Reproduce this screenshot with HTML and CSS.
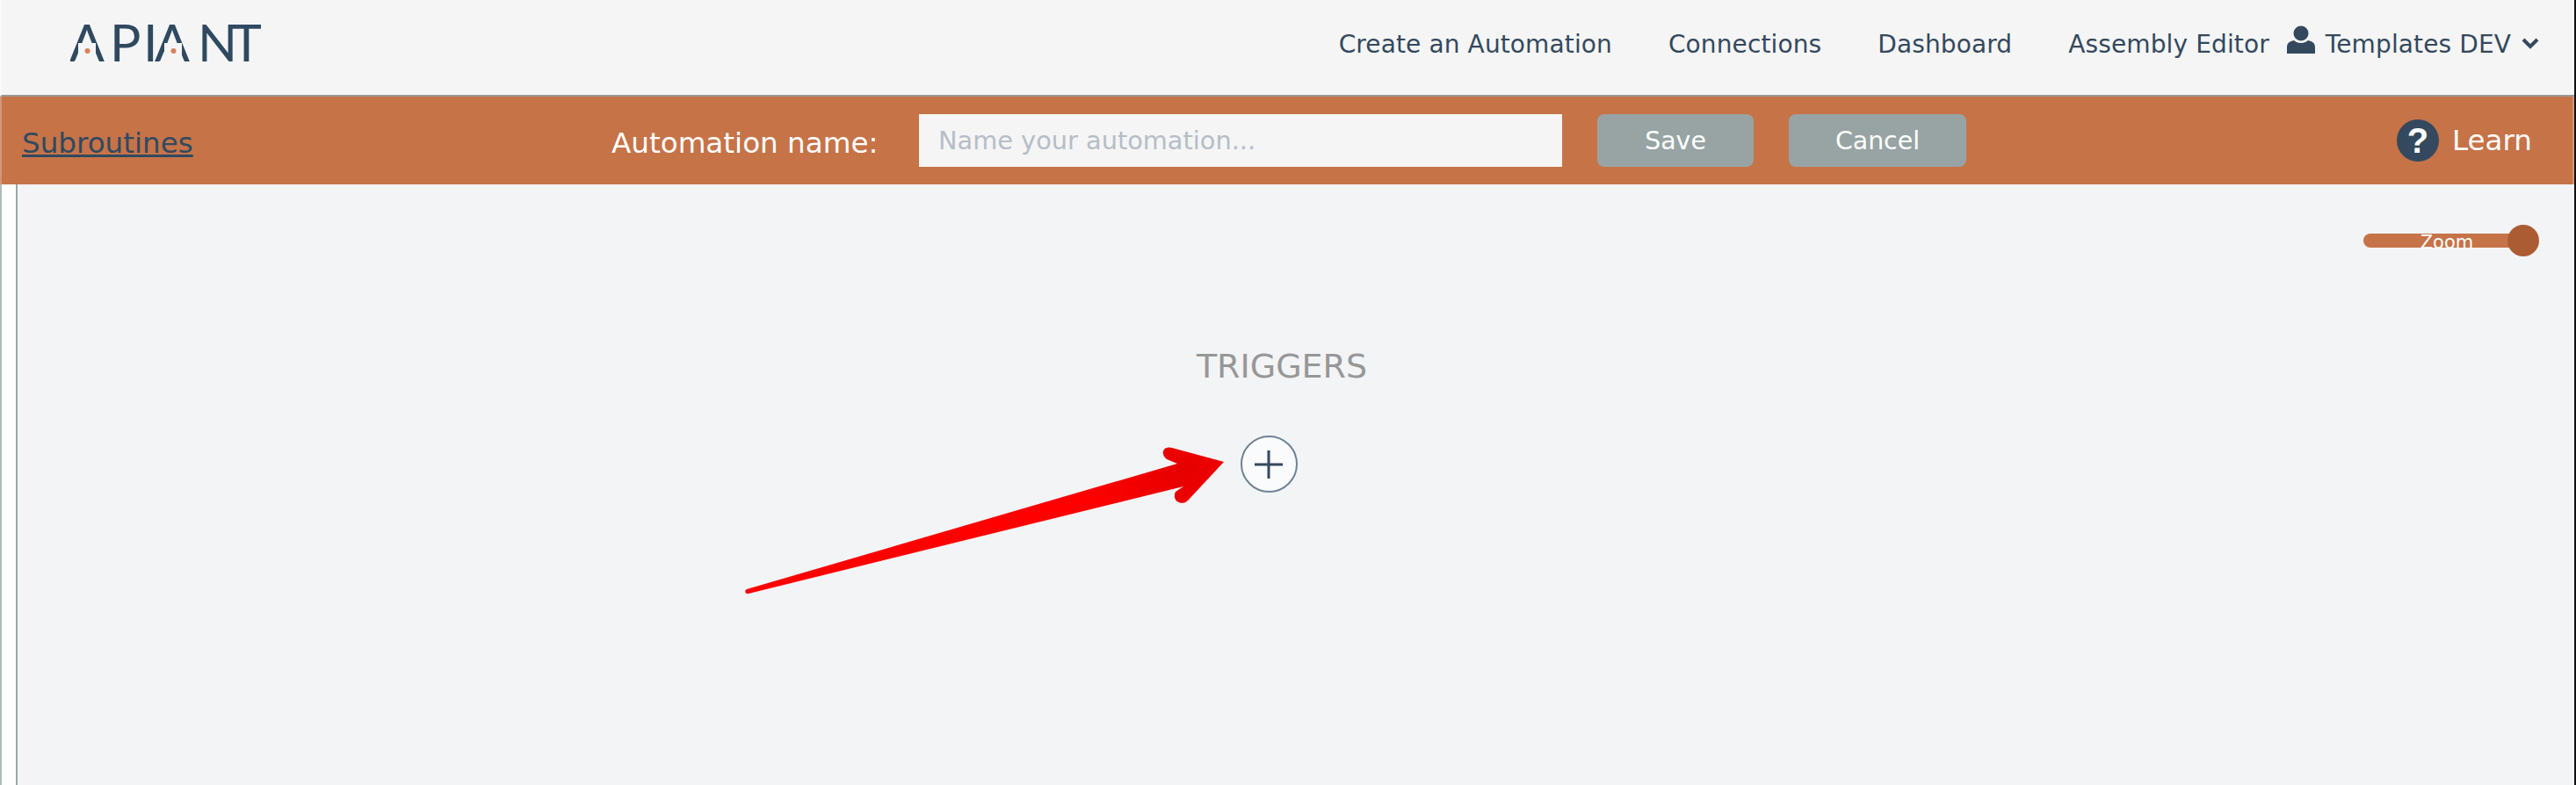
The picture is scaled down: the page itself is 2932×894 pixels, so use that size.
FILE: index.html
```html
<!DOCTYPE html>
<html lang="en">
<head>
  <meta charset="UTF-8">
  <title>APIANT - Create an Automation</title>
  <link rel="stylesheet" href="styles.css">
</head>
<body>
<div class="page">
  <header class="topbar">
    <svg class="logo" width="240" height="60" viewBox="0 0 240 60">
      <text class="logo-text" x="-1 45 83 96 145 183" y="47">APIANT</text>
      <!-- the logo's A has no crossbar -->
      <rect class="logo-gap" x="9" y="26" width="20" height="14"></rect>
      <rect class="logo-gap" x="107" y="26" width="20" height="14"></rect>
      <circle class="logo-dot" cx="19.5" cy="35" r="3"></circle>
      <circle class="logo-dot" cx="117.5" cy="35" r="3"></circle>
    </svg>
    <nav class="nav">
      <a href="#">Create an Automation</a>
      <a href="#">Connections</a>
      <a href="#">Dashboard</a>
      <a href="#">Assembly Editor</a>
      <div class="user">
        <svg class="user-icon" width="32" height="32" viewBox="0 0 32 32">
          <circle cx="16" cy="9" r="8.5"></circle>
          <path d="M0 32v-7c0-5 3-7 8-8 2 2 5 3 8 3s6-1 8-3c5 1 8 3 8 8v7z"></path>
        </svg>
        <span>Templates DEV</span>
        <svg class="chevron" width="20" height="14" viewBox="0 0 20 14">
          <path d="M2 3l8 8 8-8"></path>
        </svg>
      </div>
    </nav>
  </header>

  <section class="toolbar">
    <a class="sub-link" href="#">Subroutines</a>
    <div class="name-form">
      <label for="autoName">Automation name:</label>
      <input type="text" id="autoName" placeholder="Name your automation...">
      <button class="btn btn-save">Save</button>
      <button class="btn btn-cancel">Cancel</button>
    </div>
    <div class="learn">
      <span class="learn-icon">?</span>
      <span>Learn</span>
    </div>
  </section>

  <main class="canvas">
    <div class="strip"></div>
    <div class="canvas-body">
      <div class="zoom-row">
        <div class="zoom-slider">
          <div class="zoom-track"><span>Zoom</span></div>
          <div class="zoom-knob"></div>
        </div>
      </div>
      <h3 class="section-title">TRIGGERS</h3>
      <button class="add-btn">
        <svg width="32" height="32" viewBox="0 0 32 32">
          <path d="M16 0v32M0 16h32"></path>
        </svg>
      </button>
    </div>
    <svg class="arrow" width="560" height="180" viewBox="840 500 560 180">
      <defs>
        <radialGradient id="redFade" gradientUnits="userSpaceOnUse" cx="1350" cy="535" r="120">
          <stop offset="0" stop-color="#e60000"></stop>
          <stop offset="1" stop-color="#ff0000"></stop>
        </radialGradient>
      </defs>
      <path fill="url(#redFade)" d="M850 671 L1340 528 L1328 523 C1320 517 1324 507 1334 510 L1393 526 L1352 570 C1345 577 1333 570 1338 560 L1347 554 L852 676 C848 677 847 672 850 671 Z"></path>
    </svg>
  </main>
</div>
</body>
</html>
```

FILE: styles.css
```css
* {
  box-sizing: border-box;
}
html, body {
  margin: 0;
  height: 100%;
  overflow: hidden;
}
body {
  font-family: "DejaVu Sans", Verdana, sans-serif;
  background-color: #f3f4f6;
  color: #34495e;
}
a {
  color: inherit;
  text-decoration: none;
}
.page {
  display: flex;
  flex-direction: column;
  height: 894px;
  border-right: 2px solid #111;
}
.topbar {
  display: flex;
  justify-content: space-between;
  height: 110px;
  padding: 0 40px 0 78px;
  background-color: #f5f5f5;
  border-left: 2px solid #f9f9f9;
  border-bottom: 2px solid #999;
}
.logo {
  margin-top: 23px;
}
.logo-text {
  font-family: "Lato", sans-serif;
  font-weight: 400;
  font-size: 59px;
  fill: #2f4a60;
}
.logo-gap {
  fill: #f5f5f5;
}
.logo-dot {
  fill: #d9825a;
}
.nav {
  display: flex;
  align-items: center;
  gap: 64px;
  padding-bottom: 7px;
  font-size: 28px;
  letter-spacing: 0.12px;
}
.user {
  display: flex;
  align-items: center;
  gap: 12px;
  margin-left: -44px;
}
.user-icon {
  fill: #34495e;
  margin-top: -12px;
}
.chevron {
  fill: none;
  stroke: #34495e;
  stroke-width: 4;
  margin-top: -4px;
}
.toolbar {
  position: relative;
  display: flex;
  align-items: center;
  justify-content: space-between;
  height: 100px;
  padding: 0 46px 0 23px;
  background-color: #c67348;
  color: #fff;
  font-size: 32.6px;
  border-left: 2px solid #d3977a;
  border-right: 2px solid #d3977a;
}
.sub-link {
  padding-top: 5px;
  color: #2f4a60;
  text-decoration: underline;
}
.name-form {
  position: absolute;
  left: 694px;
  top: 20px;
  display: flex;
  align-items: center;
}
.name-form label {
  width: 350px;
  padding-top: 5px;
}
.name-form input {
  width: 732px;
  height: 60px;
  padding: 0 22px;
  margin-right: 40px;
  border: none;
  border-radius: 0;
  background-color: #f5f5f5;
  font-family: inherit;
  font-size: 28.8px;
}
.name-form input::placeholder {
  color: #b5bdc7;
  opacity: 1;
}
.btn {
  height: 60px;
  border: none;
  border-radius: 8px;
  background-color: #98a4a4;
  color: #fff;
  font-family: inherit;
  font-size: 28.4px;
}
.btn-save {
  width: 178px;
  margin-right: 40px;
}
.btn-cancel {
  width: 202px;
}
.learn {
  display: flex;
  align-items: center;
  gap: 15px;
}
.learn-icon {
  display: flex;
  align-items: center;
  justify-content: center;
  width: 48px;
  height: 48px;
  border-radius: 50%;
  background-color: #34495e;
  font-family: "Liberation Sans", sans-serif;
  font-size: 40px;
  font-weight: bold;
}
.canvas {
  position: relative;
  flex: 1;
  display: flex;
}
.strip {
  width: 20px;
  background-color: #fff;
  border-left: 2px solid #aebbbb;
  border-right: 2px solid #98a8a8;
}
.canvas-body {
  flex: 1;
  display: flex;
  flex-direction: column;
  align-items: center;
}
.zoom-row {
  align-self: flex-end;
  padding: 46px 40px 0 0;
}
.zoom-slider {
  position: relative;
  width: 200px;
  height: 36px;
  display: flex;
  align-items: center;
}
.zoom-track {
  width: 190px;
  height: 16px;
  border-radius: 8px;
  background-color: #c67348;
  color: #fff;
  font-size: 21px;
  line-height: 20px;
  text-align: center;
}
.zoom-knob {
  position: absolute;
  right: 0;
  top: 0;
  width: 36px;
  height: 36px;
  border-radius: 50%;
  background-color: #ab5c33;
}
.section-title {
  margin: 105px 32px 0 0;
  font-size: 38px;
  font-weight: normal;
  line-height: 40px;
  color: #979797;
}
.add-btn {
  display: flex;
  align-items: center;
  justify-content: center;
  width: 65px;
  height: 65px;
  margin: 59px 0 0 -62px;
  padding: 0;
  border: 2px solid #6d8296;
  border-radius: 50%;
  background-color: #fafbfc;
}
.add-btn path {
  stroke: #34495e;
  stroke-width: 3;
  fill: none;
}
.arrow {
  position: absolute;
  left: 840px;
  top: 290px;
}
```
